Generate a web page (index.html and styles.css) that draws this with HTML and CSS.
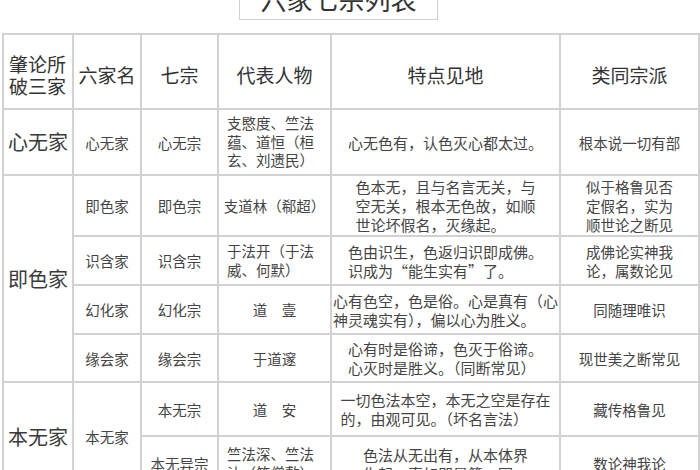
FILE: index.html
```html
<!DOCTYPE html>
<html lang="zh-CN">
<head>
<meta charset="utf-8">
<title>六家七宗列表</title>
<link rel="stylesheet" href="styles.css">
</head>
<body>
<div class="page">
  <div class="title-row">
    <div class="title">六家七宗列表</div>
  </div>
  <table class="grid">
    <colgroup>
      <col class="c1"><col class="c2"><col class="c3"><col class="c4"><col class="c5"><col class="c6">
    </colgroup>
    <tr class="h-head">
      <th class="head two">肇论所<br>破三家</th>
      <th class="head">六家名</th>
      <th class="head">七宗</th>
      <th class="head">代表人物</th>
      <th class="head">特点见地</th>
      <th class="head">类同宗派</th>
    </tr>
    <tr class="h-r1">
      <td class="big">心无家</td>
      <td>心无家</td>
      <td>心无宗</td>
      <td class="left">支愍度、竺法<br>蕴、道恒（桓<br>玄、刘遗民）</td>
      <td class="wide">心无色有，认色灭心都太过。</td>
      <td>根本说一切有部</td>
    </tr>
    <tr class="h-r2">
      <td class="big" rowspan="4">即色家</td>
      <td>即色家</td>
      <td>即色宗</td>
      <td>支道林（郗超）</td>
      <td class="wide"><span class="block">色本无，且与名言无关，与<br>空无关，根本无色故，如顺<br>世论坏假名，灭缘起。</span></td>
      <td>似于格鲁见否<br>定假名，实为<br>顺世论之断见</td>
    </tr>
    <tr class="h-r3">
      <td>识含家</td>
      <td>识含宗</td>
      <td class="left">于法开（于法<br>威、何默）</td>
      <td class="wide"><span class="block">色由识生，色返归识即成佛。<br>识成为“能生实有”了。</span></td>
      <td>成佛论实神我<br>论，属数论见</td>
    </tr>
    <tr class="h-r4">
      <td>幻化家</td>
      <td>幻化宗</td>
      <td>道　壹</td>
      <td class="wide"><span class="block">心有色空，色是俗。心是真有（心<br>神灵魂实有），偏以心为胜义。</span></td>
      <td>同随理唯识</td>
    </tr>
    <tr class="h-r5">
      <td>缘会家</td>
      <td>缘会宗</td>
      <td>于道邃</td>
      <td class="wide"><span class="block">心有时是俗谛，色灭于俗谛。<br>心灭时是胜义。（同断常见）</span></td>
      <td>现世美之断常见</td>
    </tr>
    <tr class="h-r6 sep">
      <td class="big" rowspan="2">本无家</td>
      <td rowspan="2">本无家</td>
      <td>本无宗</td>
      <td>道　安</td>
      <td class="wide"><span class="block">一切色法本空，本无之空是存在<br>的，由观可见。（坏名言法）</span></td>
      <td>藏传格鲁见</td>
    </tr>
    <tr class="h-r7">
      <td>本无异宗</td>
      <td class="left">竺法深、竺法<br>汰（竺僧敷）</td>
      <td class="wide"><span class="block">色法从无出有，从本体界<br>生起，真如即是第一因。</span></td>
      <td>数论神我论</td>
    </tr>
  </table>
</div>
</body>
</html>
```
FILE: styles.css
```css
html, body {
  margin: 0;
  padding: 0;
  background: #ffffff;
  overflow: hidden;
}
body {
  font-family: "Noto Sans CJK SC", "Noto Sans", sans-serif;
  color: #444444;
}
.page {
  padding-left: 2px;
}
.title-row {
  display: flex;
  padding-left: 237px;
}
.title {
  box-sizing: border-box;
  width: 199px;
  height: 40px;
  margin-top: -20px;
  border: 1px solid #cfcfcf;
  font-size: 26px;
  line-height: 36px;
  text-align: center;
  color: #333333;
}
.grid {
  margin-top: 13px;
  width: 696px;
  table-layout: fixed;
  border-collapse: collapse;
}
.c1 { width: 70px; }
.c2 { width: 68px; }
.c3 { width: 77px; }
.c4 { width: 113px; }
.c5 { width: 229px; }
.c6 { width: 139px; }
.grid th, .grid td {
  border: 2px solid #d2d2d2;
  padding: 0;
  text-align: center;
  vertical-align: middle;
  font-size: 14.5px;
  line-height: 19px;
  font-weight: normal;
  white-space: nowrap;
  overflow: hidden;
}
.grid th.head {
  font-size: 19px;
  line-height: 22px;
  color: #333333;
  padding-top: 6px;
}
.grid th.two {
  text-align: left;
  padding-left: 5px;
}
.grid td.big {
  font-size: 20px;
  line-height: 24px;
  color: #3a3a3a;
}
.grid td.left {
  text-align: left;
  padding-left: 8px;
  line-height: 18.5px;
}
.grid td.wide {
  font-size: 15px;
}
.block {
  display: inline-block;
  text-align: left;
}
.grid tr.sep td {
  border-top-color: #b9b9b9;
}
.h-head { height: 75px; }
.h-r1 { height: 66px; }
.h-r2 { height: 61px; }
.h-r3 { height: 49px; }
.h-r4 { height: 49px; }
.h-r5 { height: 48px; }
.h-r6 { height: 54px; }
.h-r7 { height: 55px; }
```
